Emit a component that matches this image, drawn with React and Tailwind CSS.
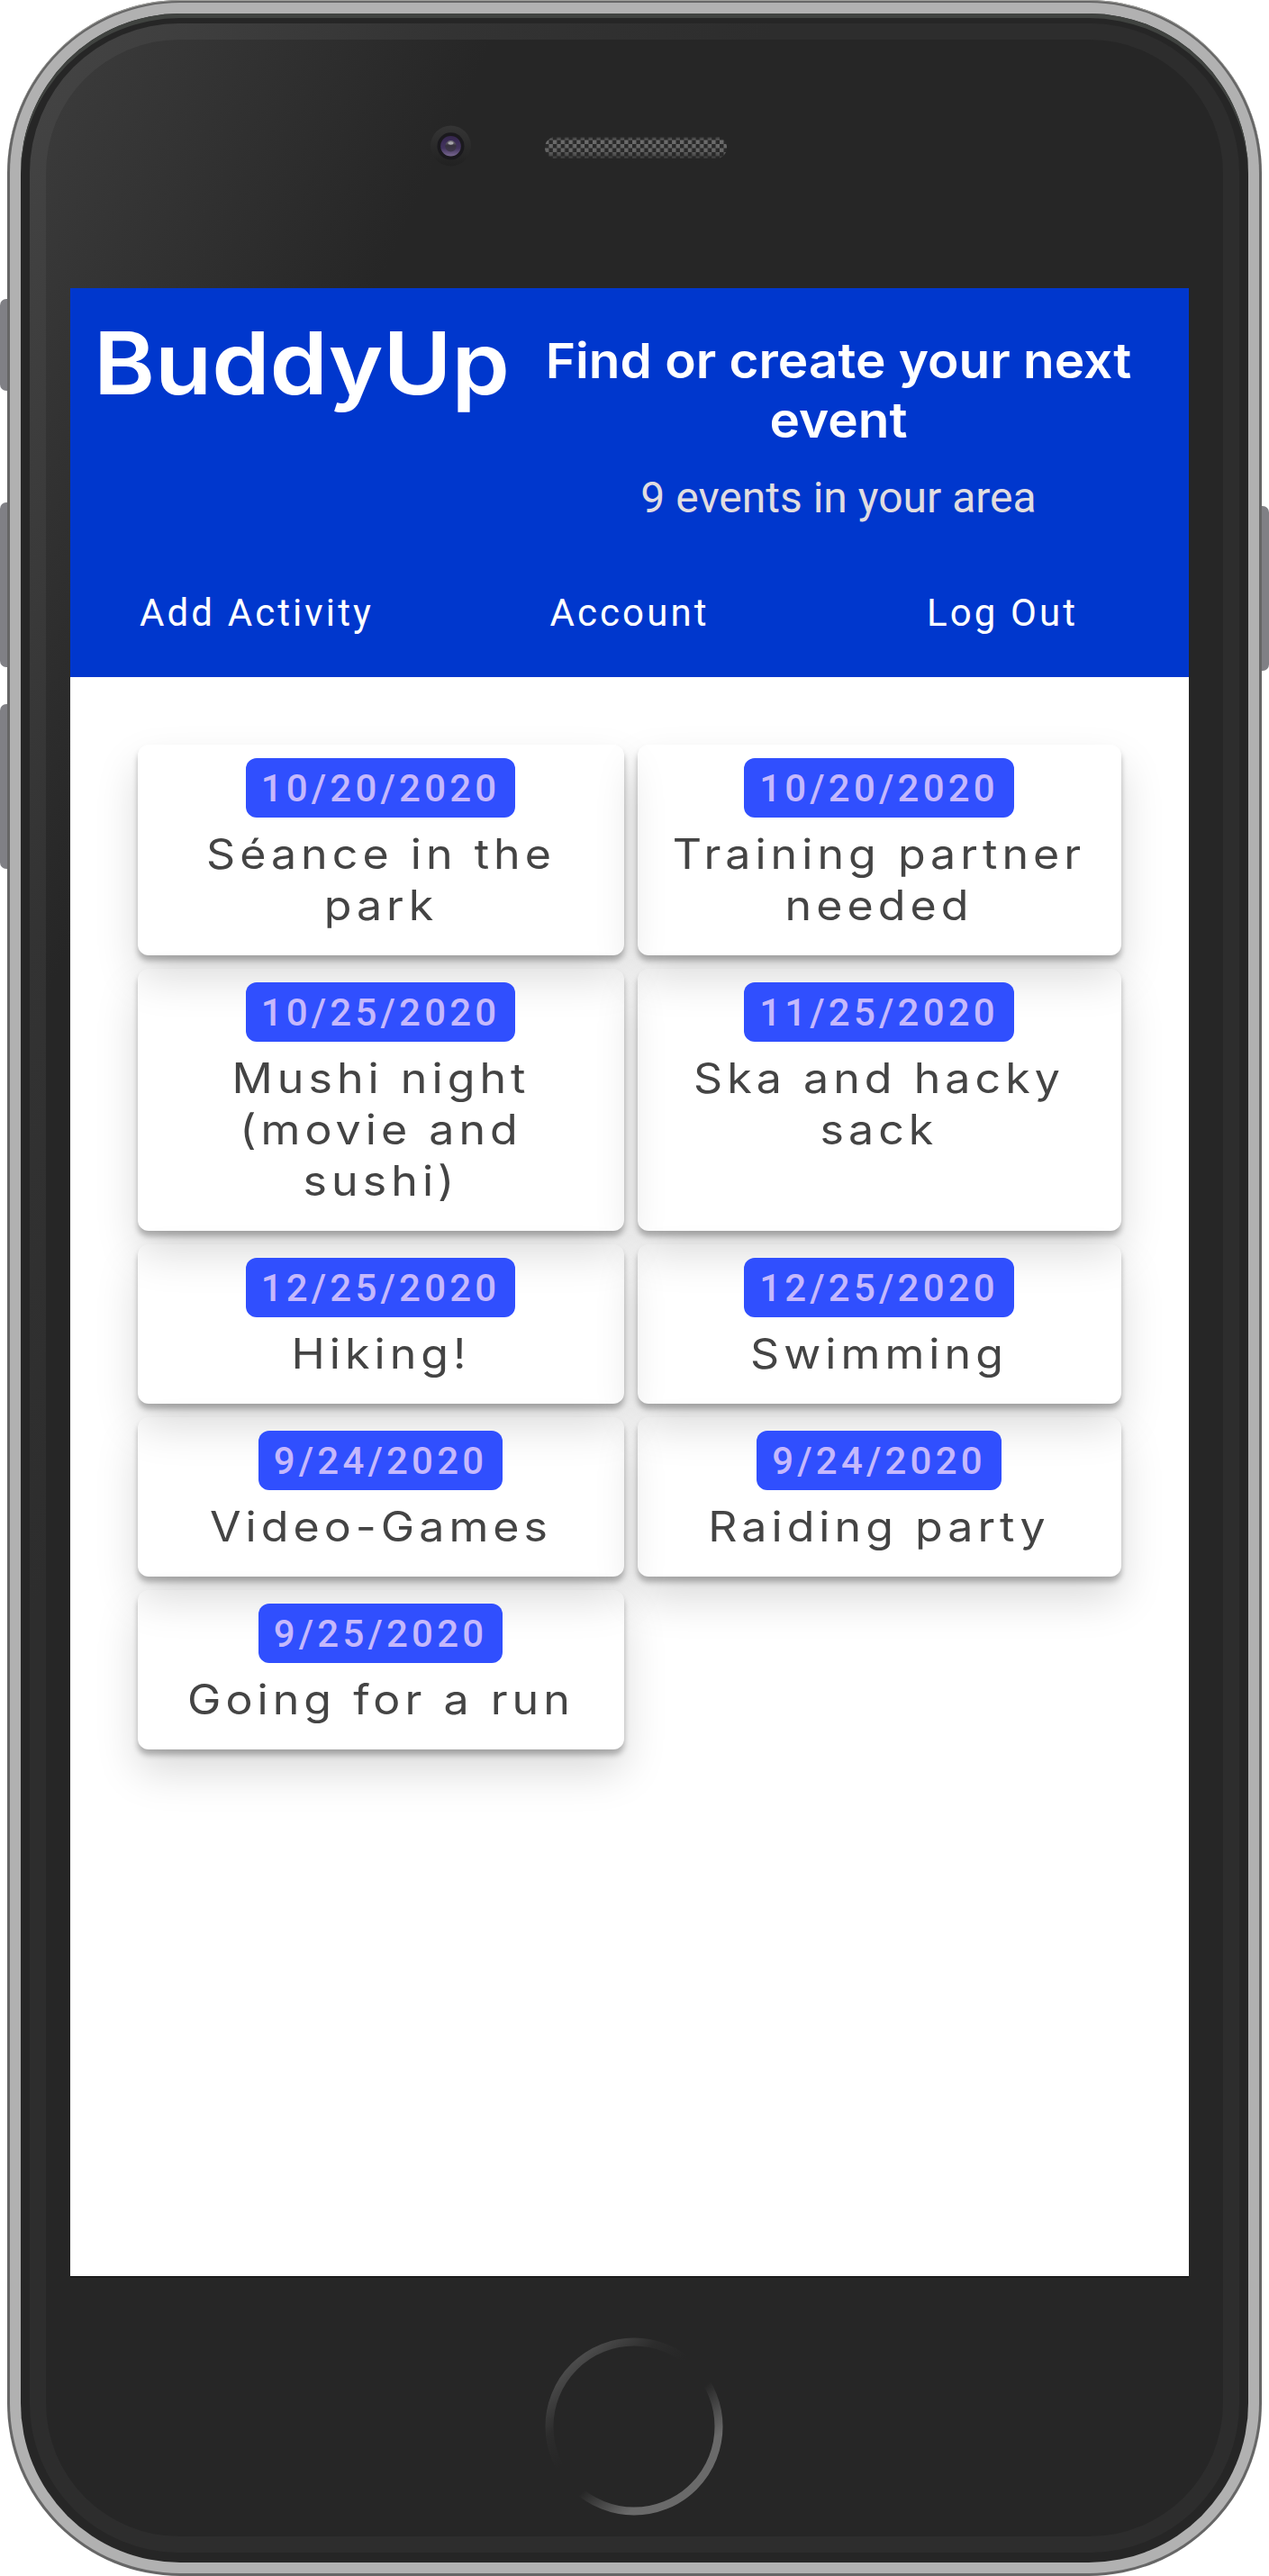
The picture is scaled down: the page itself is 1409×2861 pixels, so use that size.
const events = [
  { date: "10/20/2020", title: "Séance in the park" },
  { date: "10/20/2020", title: "Training partner needed" },
  { date: "10/25/2020", title: "Mushi night (movie and sushi)" },
  { date: "11/25/2020", title: "Ska and hacky sack" },
  { date: "12/25/2020", title: "Hiking!" },
  { date: "12/25/2020", title: "Swimming" },
  { date: "9/24/2020", title: "Video-Games" },
  { date: "9/24/2020", title: "Raiding party" },
  { date: "9/25/2020", title: "Going for a run" },
];

const navItems = ["Add Activity", "Account", "Log Out"];

function Camera() {
  return (
    <svg width="46" height="46" viewBox="0 0 46 46" className="block">
      <defs>
        <linearGradient id="cam-rim" x1="0" y1="0" x2="0" y2="1">
          <stop offset="0" stopColor="#353535" />
          <stop offset="1" stopColor="#212121" />
        </linearGradient>
        <linearGradient id="cam-lens" x1="0" y1="0" x2="0" y2="1">
          <stop offset="0" stopColor="#35264e" />
          <stop offset="0.6" stopColor="#43345f" />
          <stop offset="1" stopColor="#78688f" />
        </linearGradient>
        <linearGradient id="cam-core" x1="0" y1="0" x2="0" y2="1">
          <stop offset="0" stopColor="#77747c" />
          <stop offset="0.45" stopColor="#37323f" />
          <stop offset="1" stopColor="#40384e" />
        </linearGradient>
      </defs>
      <circle cx="22.5" cy="23" r="22.5" fill="url(#cam-rim)" />
      <circle cx="22.5" cy="23.3" r="15" fill="#1a191d" />
      <circle cx="22.5" cy="23.3" r="11.3" fill="url(#cam-lens)" />
      <circle cx="22.5" cy="23.3" r="6.2" fill="url(#cam-core)" />
      <ellipse cx="22.5" cy="20" rx="3" ry="1.7" fill="#a9a7ad" />
    </svg>
  );
}

function Speaker() {
  return (
    <svg width="202" height="24" viewBox="0 0 202 24" className="block">
      <defs>
        <pattern id="mesh" width="8.82" height="9" patternUnits="userSpaceOnUse" x="0" y="-1">
          <rect width="8.82" height="9" fill="#2a2a2a" />
          <rect x="4.41" width="4.41" height="4.5" fill="#747474" />
          <rect y="4.5" width="4.41" height="4.5" fill="#747474" />
        </pattern>
        <linearGradient id="mesh-shade" x1="0" y1="0" x2="0" y2="1">
          <stop offset="0" stopColor="#262626" stopOpacity="0.9" />
          <stop offset="0.16" stopColor="#262626" stopOpacity="0.1" />
          <stop offset="0.65" stopColor="#262626" stopOpacity="0.2" />
          <stop offset="1" stopColor="#262626" stopOpacity="0.75" />
        </linearGradient>
      </defs>
      <rect width="202" height="24" rx="12" fill="url(#mesh)" />
      <rect width="202" height="24" rx="12" fill="url(#mesh-shade)" />
    </svg>
  );
}

function HomeButton() {
  return (
    <svg width="198" height="198" viewBox="-99 -99 198 198" className="block">
      <defs>
        <linearGradient id="home-ring" gradientUnits="userSpaceOnUse" x1="-64" y1="-74" x2="64" y2="74">
          <stop offset="0" stopColor="#4c4c4c" />
          <stop offset="0.22" stopColor="#2c2c2c" />
          <stop offset="0.4" stopColor="#262626" />
          <stop offset="0.59" stopColor="#262626" />
          <stop offset="0.85" stopColor="#6a6a6a" />
          <stop offset="1" stopColor="#6a6a6a" />
        </linearGradient>
      </defs>
      <circle r="94" fill="none" stroke="url(#home-ring)" strokeWidth="9" />
    </svg>
  );
}

function Header() {
  return (
    <header className="flex h-[432px] flex-col bg-[#0037cd] text-white">
      <div className="flex h-[319px] pl-[26px]">
        <h1 className="w-[418px] shrink-0 origin-left scale-x-[1.075] pt-[25px] font-[Inter] text-[96px] leading-[116px] font-semibold">
          BuddyUp
        </h1>
        <div className="ml-[59px] flex w-[700px] flex-col items-center pt-[48px]">
          <h2 className="w-[640px] scale-x-[1.05] text-center font-[Inter] text-[54px] leading-[66px] font-semibold">
            Find or create your next event
          </h2>
          <p className="mt-[25px] text-[48px] leading-[56px] text-[#e0dde0]">9 events in your area</p>
        </div>
      </div>
      <nav className="grid grid-cols-3">
        {navItems.map((item) => (
          <a key={item} className="pt-[17px] text-center text-[42px] leading-[50px] font-[450] tracking-[3.1px]">
            {item}
          </a>
        ))}
      </nav>
    </header>
  );
}

function EventCard({ date, title }) {
  return (
    <article className="flex flex-col items-center rounded-[12px] pt-[15px] pb-[27px] shadow-[0_24px_48px_rgba(0,0,0,0.15),0_6px_6px_rgba(0,0,0,0.27)]">
      <time className="mr-[1px] flex h-[66px] items-center rounded-[12px] bg-[#304ffe] pt-[1px] pr-[17px] pl-[17px] text-[42px] leading-[65px] font-medium tracking-[4.2px] text-[#c5b8fc]">
        {date}
      </time>
      <h3 className="mt-[12px] mr-[1px] w-[432px] scale-x-[1.09] text-center font-[Inter] text-[46px] leading-[57px] font-normal tracking-[4.6px] text-[#444444]">
        {title}
      </h3>
    </article>
  );
}

export default function App() {
  return (
    <div className="relative flex h-[2861px] w-[1409px] justify-center overflow-hidden bg-white font-[Roboto,sans-serif]">
      {/* Hardware side buttons */}
      <span className="absolute top-[332px] left-0 h-[102px] w-[12px] rounded-l-[7px] bg-[#808085]" />
      <span className="absolute top-[558px] left-0 h-[183px] w-[12px] rounded-l-[7px] bg-[#808085]" />
      <span className="absolute top-[782px] left-0 h-[183px] w-[12px] rounded-l-[7px] bg-[#808085]" />
      <span className="absolute top-[562px] right-0 h-[183px] w-[12px] rounded-r-[7px] bg-[#808085]" />

      <div className="relative h-[2861px] w-[1393px] rounded-[192px] bg-[#666666] p-[3px] shadow-[inset_0_1px_0_#a0a09c]">
        <div className="h-full rounded-[189px] bg-[#b1b1b1] p-[12px]">
          <div className="h-full rounded-[177px] bg-[#262626] px-[10px] pt-[11px] pb-[11px] shadow-[inset_0_5px_0_#404340]">
            <div className="h-full rounded-[166px] bg-[linear-gradient(115deg,#454545_0px,#333333_430px,#2d2d2d_750px)] p-[18px]">
              <div className="flex h-full flex-col rounded-[148px] bg-[linear-gradient(115deg,#3c3c3c_0px,#262626_450px)] pl-[27px]">
                <div className="flex h-[276px] shrink-0 items-start pt-[95px] pl-[400px]">
                  <Camera />
                  <div className="mt-[13px] ml-[81px]">
                    <Speaker />
                  </div>
                </div>

                <main className="h-[2208px] w-[1242px] shrink-0 overflow-hidden bg-white">
                  <Header />
                  <section className="grid grid-cols-[540px_537px] gap-[15px] pt-[75px] pl-[75px]">
                    {events.map((event, i) => (
                      <EventCard key={i} {...event} />
                    ))}
                  </section>
                </main>

                <div className="w-[1242px] border-t border-black pt-[67px] pl-[527px]">
                  <HomeButton />
                </div>
              </div>
            </div>
          </div>
        </div>
      </div>
    </div>
  );
}
